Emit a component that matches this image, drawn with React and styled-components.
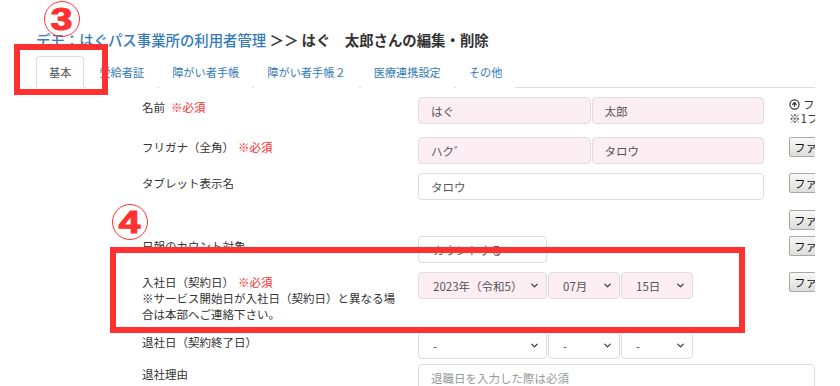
import React from 'react';
import styled, { createGlobalStyle } from 'styled-components';
import { ChevronDown, CircleArrowUp } from 'lucide-react';

const GlobalStyle = createGlobalStyle`
  html, body {
    margin: 0;
    padding: 0;
    background: #fff;
    overflow: hidden;
  }
  body {
    font-family: "Noto Sans CJK JP", "Noto Sans", sans-serif;
    color: #333;
  }
`;

const Page = styled.div`
  position: relative;
  width: 815px;
  height: 386px;
  overflow: hidden;
  padding: 30px 0 0 36px;
  box-sizing: border-box;
`;

const Title = styled.h1`
  margin: 0;
  font-size: 14.4px;
  line-height: 20px;
  font-weight: 700;
  color: #333;
  white-space: nowrap;
`;

const TitleLink = styled.a`
  color: #337ab7;
  font-weight: 500;
  text-decoration: none;
`;

const Tabs = styled.ul`
  display: flex;
  margin: 6px 0 0;
  padding: 0;
  list-style: none;
  border-bottom: 1px solid #ddd;
`;

const Tab = styled.li`
  margin: 0 2px -1px 0;
  padding: 7px 12px;
  font-size: 11.2px;
  line-height: 16px;
  white-space: nowrap;
  color: ${({ $active }) => ($active ? '#555' : '#337ab7')};
  background: #fff;
  border: 1px solid ${({ $active }) => ($active ? '#ddd' : 'transparent')};
  border-bottom-color: ${({ $active }) => ($active ? '#fff' : 'transparent')};
  border-radius: 4px 4px 0 0;
`;

const Form = styled.div`
  margin-top: 9px;
  padding-left: 106px;
`;

const Row = styled.div`
  display: grid;
  grid-template-columns: 276px 346px 1fr;
  align-items: start;
  height: ${({ $h }) => $h}px;
`;

const Label = styled.div`
  width: 258px;
  padding-top: 2px;
  font-size: 11.5px;
  line-height: 16px;
  color: #333;
`;

const Required = styled.span`
  margin-left: ${({ $gap }) => $gap ?? 4}px;
  color: #ff2a2a;
`;

const Fields = styled.div`
  display: flex;
  gap: 1px;
  grid-column: ${({ $wide }) => ($wide ? '2 / 4' : 'auto')};
`;

const TextInput = styled.input`
  box-sizing: border-box;
  width: ${({ $w }) => $w}px;
  height: 27px;
  margin: 0;
  padding: 0 12px;
  border: 1px solid #ddd;
  border-radius: 4px;
  background: ${({ $pink }) => ($pink ? '#fdeef4' : '#fff')};
  font: inherit;
  font-size: 11.5px;
  color: #555;
  outline: none;

  &::placeholder {
    color: #999;
  }
`;

const Select = styled.div`
  box-sizing: border-box;
  width: ${({ $w }) => $w}px;
  height: 27px;
  padding: 0 6px 0 14px;
  display: flex;
  align-items: center;
  justify-content: space-between;
  border: 1px solid #ddd;
  border-radius: 4px;
  background: ${({ $pink }) => ($pink ? '#fdeef4' : '#fff')};
  font-size: 11.5px;
  color: #555;
  white-space: nowrap;

  svg {
    flex: none;
    color: #333;
  }
`;

const Side = styled.div`
  padding-left: 25px;
  font-size: 11.5px;
  line-height: 14px;
  white-space: nowrap;
  color: #333;
`;

const SideLine = styled.div`
  display: flex;
  align-items: center;
  gap: 3px;
`;

const FileButton = styled.button`
  height: 20px;
  margin: 0;
  padding: 0 4px;
  border: 1px solid #a9a9a9;
  border-radius: 2px;
  background: linear-gradient(#f8f8f8, #dddddd);
  font: inherit;
  font-size: 11.5px;
  color: #111;
  white-space: nowrap;
`;

const Callout = styled.div`
  position: absolute;
  box-sizing: border-box;
  border: 6px solid #ff3131;
  pointer-events: none;
`;

const Badge = styled.div`
  position: absolute;
  box-sizing: border-box;
  width: 36px;
  height: 36px;
  border: 1.5px solid #ff3131;
  border-radius: 50%;
  display: flex;
  align-items: center;
  justify-content: center;
  font-family: "Liberation Sans", "Noto Sans", sans-serif;
  font-weight: 900;
  font-size: 31px;
  line-height: 1;
  color: #ff3131;

  span {
    display: inline-block;
    margin-top: 1px;
    transform: scaleX(1.25);
    -webkit-text-stroke: 1.2px #ff3131;
  }
`;

const Chevron = () => <ChevronDown size={11} strokeWidth={2.6} />;

const tabs = ['基本', '受給者証', '障がい者手帳', '障がい者手帳２', '医療連携設定', 'その他'];

export default function App() {
  return (
    <>
      <GlobalStyle />
      <Page>
        <Title>
          <TitleLink href="#">デモ：はぐパス事業所の利用者管理</TitleLink> ＞＞ はぐ　太郎さんの編集・削除
        </Title>
        <Tabs>
          {tabs.map((t, i) => (
            <Tab key={t} $active={i === 0}>{t}</Tab>
          ))}
        </Tabs>

        <Form>
          <Row $h={40}>
            <Label>名前<Required $gap={6}>※必須</Required></Label>
            <Fields>
              <TextInput $pink $w={173} defaultValue="はぐ" readOnly />
              <TextInput $pink $w={173} defaultValue="太郎" readOnly />
            </Fields>
            <Side>
              <SideLine><CircleArrowUp size={11} strokeWidth={2.6} />ファイルをアップロード</SideLine>
              <SideLine>※1ファイル5MBまで</SideLine>
            </Side>
          </Row>

          <Row $h={36}>
            <Label>フリガナ（全角）<Required>※必須</Required></Label>
            <Fields>
              <TextInput $pink $w={173} defaultValue="ハク゛" readOnly />
              <TextInput $pink $w={173} defaultValue="タロウ" readOnly />
            </Fields>
            <Side><FileButton>ファイルを選択</FileButton></Side>
          </Row>

          <Row $h={37}>
            <Label>タブレット表示名</Label>
            <Fields>
              <TextInput $w={346} defaultValue="タロウ" readOnly />
            </Fields>
            <Side><FileButton>ファイルを選択</FileButton></Side>
          </Row>

          <Row $h={26}>
            <Label />
            <Fields />
            <Side><FileButton>ファイルを選択</FileButton></Side>
          </Row>

          <Row $h={36}>
            <Label>日報のカウント対象</Label>
            <Fields>
              <Select $w={129}>カウントする<Chevron /></Select>
            </Fields>
            <Side><FileButton>ファイルを選択</FileButton></Side>
          </Row>

          <Row $h={60}>
            <Label>
              入社日（契約日）<Required>※必須</Required>
              <br />
              ※サービス開始日が入社日（契約日）と異なる場合は本部へご連絡下さい。
            </Label>
            <Fields>
              <Select $pink $w={129}>2023年（令和5）<Chevron /></Select>
              <Select $pink $w={72}>07月<Chevron /></Select>
              <Select $pink $w={72}>15日<Chevron /></Select>
            </Fields>
            <Side><FileButton>ファイルを選択</FileButton></Side>
          </Row>

          <Row $h={32}>
            <Label>退社日（契約終了日）</Label>
            <Fields>
              <Select $w={129}>-<Chevron /></Select>
              <Select $w={72}>-<Chevron /></Select>
              <Select $w={72}>-<Chevron /></Select>
            </Fields>
          </Row>

          <Row $h={40}>
            <Label>退社理由</Label>
            <Fields $wide>
              <TextInput $w={480} placeholder="退職日を入力した際は必須" readOnly />
            </Fields>
          </Row>
        </Form>

        <Callout style={{ left: 14, top: 44, width: 94, height: 51 }} />
        <Callout style={{ left: 110, top: 247, width: 635, height: 86 }} />
        <Badge style={{ left: 44, top: 1 }}><span>3</span></Badge>
        <Badge style={{ left: 112, top: 204 }}><span>4</span></Badge>
      </Page>
    </>
  );
}
